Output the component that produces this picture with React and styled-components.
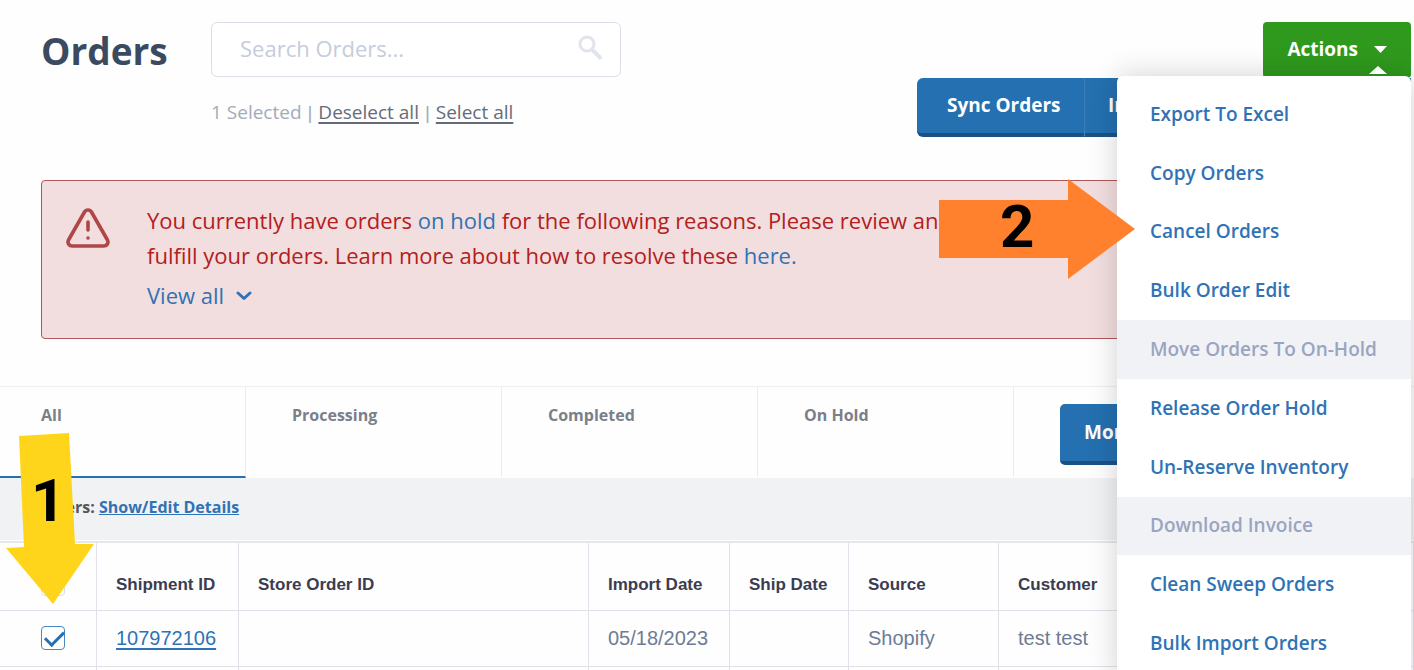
import React, { useState } from 'react';
import styled, { createGlobalStyle } from 'styled-components';
import { TriangleAlert } from 'lucide-react';

const menuItems = [
  { label: 'Export To Excel' },
  { label: 'Copy Orders' },
  { label: 'Cancel Orders' },
  { label: 'Bulk Order Edit' },
  { label: 'Move Orders To On-Hold', disabled: true },
  { label: 'Release Order Hold' },
  { label: 'Un-Reserve Inventory' },
  { label: 'Download Invoice', disabled: true },
  { label: 'Clean Sweep Orders' },
  { label: 'Bulk Import Orders' }
];

const tabs = ['All', 'Processing', 'Completed', 'On Hold'];

const orders = [{ id: '107972106', storeId: '', importDate: '05/18/2023', shipDate: '', source: 'Shopify', customer: 'test test' }];

const App = () => {
  const [search, setSearch] = useState('');
  const [activeTab, setActiveTab] = useState('All');
  const [selected, setSelected] = useState(['107972106']);

  const toggleOrder = (id) => {
    setSelected((prev) => (prev.includes(id) ? prev.filter((item) => item !== id) : [...prev, id]));
  };

  return (
    <Page>
      <GlobalStyle />
      <Header>
        <Title>Orders</Title>
        <SearchColumn>
          <SearchBox>
            <SearchInput
              aria-label="Search Orders"
              placeholder="Search Orders..."
              value={search}
              onChange={(e) => setSearch(e.target.value)}
            />
            <svg width="26" height="26" viewBox="0 0 26 26" fill="none" stroke="#e1e4ec">
              <circle cx="10" cy="9" r="7" strokeWidth="3" />
              <path d="M15 14.5 L23 22.5" strokeWidth="4" strokeLinecap="round" />
            </svg>
          </SearchBox>
          <SelectionBar>
            {selected.length} Selected <Separator>|</Separator> <SelectLink href="#none">Deselect all</SelectLink>{' '}
            <Separator>|</Separator> <SelectLink href="#all">Select all</SelectLink>
          </SelectionBar>
        </SearchColumn>
        <ButtonColumn>
          <ActionsWrap>
            <ActionsButton type="button">
              Actions
              <svg width="13" height="8" viewBox="0 0 13 8" fill="#fff">
                <path d="M0 1 H13 L6.5 8 Z" />
              </svg>
            </ActionsButton>
            <Menu>
              {menuItems.map((item) => (
                <li key={item.label}>
                  <MenuButton type="button" disabled={item.disabled}>
                    {item.label}
                  </MenuButton>
                </li>
              ))}
            </Menu>
          </ActionsWrap>
          <ButtonGroup>
            <BlueButton type="button">Sync Orders</BlueButton>
            <BlueButton type="button">In</BlueButton>
          </ButtonGroup>
        </ButtonColumn>
      </Header>

      <Alert>
        <TriangleAlert size={48} strokeWidth={1.8} color="#b04646" />
        <div>
          <AlertText>
            You currently have orders <a href="#hold">on hold</a> for the following reasons. Please review and
            <br />
            fulfill your orders. Learn more about how to resolve these <a href="#here">here.</a>
          </AlertText>
          <ViewAll type="button">
            View all
            <svg width="16" height="10" viewBox="0 0 16 10" fill="none" stroke="#2f73b5" strokeWidth="3">
              <path d="M2 2 L8 7.5 L14 2" strokeLinecap="round" strokeLinejoin="round" />
            </svg>
          </ViewAll>
        </div>
        <OrangeArrow>
          <svg width="196" height="100" viewBox="0 0 196 100" fill="#ff812d">
            <path d="M0 21 H129 V0 L196 50 L129 100 V79 H0 Z" />
          </svg>
          <StepNumber>2</StepNumber>
        </OrangeArrow>
      </Alert>

      <TabRow>
        {tabs.map((tab) => (
          <Tab key={tab} type="button" $active={tab === activeTab} onClick={() => setActiveTab(tab)}>
            {tab}
          </Tab>
        ))}
        <TabExtra>
          <BlueButton type="button" $compact>
            More
          </BlueButton>
        </TabExtra>
      </TabRow>

      <FilterBar>
        Filters: <a href="#details">Show/Edit Details</a>
      </FilterBar>

      <TableWrap>
        <OrderTable>
          <colgroup>
            <Col $w={97} />
            <Col $w={142} />
            <Col $w={350} />
            <Col $w={141} />
            <Col $w={119} />
            <Col $w={150} />
            <col />
          </colgroup>
          <thead>
            <tr>
              <HeadCell $check>
                <Checkbox aria-label="Select all orders" />
              </HeadCell>
              <HeadCell>Shipment ID</HeadCell>
              <HeadCell>Store Order ID</HeadCell>
              <HeadCell>Import Date</HeadCell>
              <HeadCell>Ship Date</HeadCell>
              <HeadCell>Source</HeadCell>
              <HeadCell>Customer</HeadCell>
            </tr>
          </thead>
          <tbody>
            {orders.map((order) => (
              <tr key={order.id}>
                <Cell $check>
                  <Checkbox
                    aria-label={`Select order ${order.id}`}
                    checked={selected.includes(order.id)}
                    onChange={() => toggleOrder(order.id)}
                  />
                </Cell>
                <Cell>
                  <a href="#order">{order.id}</a>
                </Cell>
                <Cell>{order.storeId}</Cell>
                <Cell>{order.importDate}</Cell>
                <Cell>{order.shipDate}</Cell>
                <Cell>{order.source}</Cell>
                <Cell>{order.customer}</Cell>
              </tr>
            ))}
            <tr>
              <Cell />
              <Cell />
              <Cell />
              <Cell />
              <Cell />
              <Cell />
              <Cell />
            </tr>
          </tbody>
        </OrderTable>
        <YellowArrow>
          <svg width="88" height="172" viewBox="0 0 88 172" fill="#ffd51c">
            <path d="M13 3 L63 0 L69 111 L88 111 L47 171 L0 115 L18 114 Z" />
          </svg>
          <StepNumber>1</StepNumber>
        </YellowArrow>
      </TableWrap>
    </Page>
  );
};

export default App;

const GlobalStyle = createGlobalStyle`
  * {
    box-sizing: border-box;
  }
  body {
    margin: 0;
    overflow: hidden;
    background: #fefefe;
    font-family: 'Open Sans', sans-serif;
  }
  a {
    color: #2f73b5;
  }
  button {
    font-family: inherit;
    cursor: pointer;
  }
`;

const Page = styled.div`
  height: 100vh;
  overflow: hidden;
`;

const Header = styled.header`
  display: flex;
  align-items: flex-start;
  padding: 22px 3px 0 41px;
`;

const Title = styled.h1`
  margin: 0;
  width: 170px;
  font-size: 37px;
  line-height: 58px;
  font-weight: 700;
  color: #3a4a60;
`;

const SearchColumn = styled.div`
  width: 410px;
`;

const SearchBox = styled.div`
  display: flex;
  align-items: center;
  height: 55px;
  padding: 0 17px 3px 28px;
  border: 1px solid #dcdfe8;
  border-radius: 6px;
  background: #fff;
`;

const SearchInput = styled.input`
  flex: 1;
  min-width: 0;
  padding: 0;
  border: 0;
  outline: 0;
  background: none;
  font: 400 22px 'Open Sans', sans-serif;
  &::placeholder {
    color: #c5ccdb;
    opacity: 1;
  }
`;

const SelectionBar = styled.div`
  margin-top: 20px;
  font-size: 19px;
  line-height: 30px;
  color: #a3abb8;
`;

const Separator = styled.span`
  margin: 0 1px;
  font-family: 'Liberation Sans', sans-serif;
`;

const SelectLink = styled.a`
  color: #666b7c;
  text-decoration-thickness: 2px;
  text-underline-offset: 3px;
`;

const ButtonColumn = styled.div`
  display: flex;
  flex-direction: column;
  align-items: flex-end;
  width: 494px;
  margin-left: auto;
`;

const ActionsWrap = styled.div`
  position: relative;
  z-index: 2;
`;

const ActionsButton = styled.button`
  display: flex;
  align-items: center;
  gap: 16px;
  height: 56px;
  padding: 0 24px 2px;
  border: 0;
  border-radius: 4px;
  background: #2f991d;
  color: #fff;
  font-size: 19px;
  font-weight: 700;
`;

const Menu = styled.ul`
  position: absolute;
  top: 54px;
  right: 0;
  display: flex;
  flex-direction: column;
  width: 294px;
  height: 606px;
  margin: 0;
  padding: 9px 0;
  list-style: none;
  border-radius: 6px;
  background: #fff;
  box-shadow: 0 0 30px rgba(0, 0, 0, 0.18);
  &::before {
    content: '';
    position: absolute;
    top: -10px;
    right: 24px;
    border: 9px solid transparent;
    border-top: 0;
    border-bottom: 8px solid #fff;
  }
  li {
    display: flex;
    flex: 1;
  }
`;

const MenuButton = styled.button`
  flex: 1;
  padding: 0 33px 1px;
  border: 0;
  background: none;
  text-align: left;
  white-space: nowrap;
  font-size: 19px;
  font-weight: 600;
  color: #2f73b5;
  &:disabled {
    background: #f1f2f6;
    color: #9aa5bf;
  }
`;

const ButtonGroup = styled.div`
  display: flex;
  align-self: stretch;
`;

const BlueButton = styled.button`
  flex: 1 1 auto;
  width: ${({ $compact }) => ($compact ? '160px' : 'auto')};
  height: ${({ $compact }) => ($compact ? '61px' : '59px')};
  padding: ${({ $compact }) => ($compact ? '0 24px 2px' : '0 23px 2px')};
  border: 0;
  border-bottom: 4px solid #1b5283;
  border-radius: ${({ $compact }) => ($compact ? '5px' : '0')};
  background: #2470b0;
  color: #fff;
  font-size: 19px;
  font-weight: 700;
  text-align: left;
  &:first-child:not(:last-child) {
    flex: 0 0 168px;
    padding-left: 30px;
    border-right: 1px solid #3a7fb9;
    border-radius: 6px 0 0 6px;
  }
`;

const Alert = styled.section`
  position: relative;
  display: flex;
  gap: 35px;
  margin: 43px 41px 0;
  padding: 22px 22px 25px;
  border: 1px solid #b0565c;
  border-radius: 4px;
  background: #f2dede;
  > svg {
    margin-top: 1px;
  }
`;

const AlertText = styled.p`
  margin: 0;
  font-size: 22px;
  line-height: 35px;
  font-weight: 500;
  color: #b22020;
  white-space: nowrap;
  a {
    text-decoration: none;
  }
`;

const ViewAll = styled.button`
  display: flex;
  align-items: center;
  gap: 12px;
  margin-top: 5px;
  padding: 0;
  border: 0;
  background: none;
  font-size: 22px;
  line-height: 35px;
  color: #2f73b5;
`;

const StepNumber = styled.span`
  position: absolute;
  font: 700 60px/60px Roboto, sans-serif;
  color: #000;
`;

/* pointers drawn over the page */
const OrangeArrow = styled.div`
  position: absolute;
  z-index: 3;
  top: -2px;
  left: 897px;
  ${StepNumber} {
    top: 18px;
    left: 61px;
  }
`;

const YellowArrow = styled.div`
  position: absolute;
  top: -107px;
  left: 6px;
  ${StepNumber} {
    top: 38px;
    left: 25px;
  }
`;

const TabRow = styled.nav`
  display: grid;
  grid-template-columns: 246px repeat(3, 256px) 1fr;
  height: 92px;
  margin-top: 47px;
  border-top: 1px solid #f0f0f3;
`;

const Tab = styled.button`
  display: flex;
  padding: 17px 46px;
  border: 0;
  border-right: 1px solid #ececef;
  border-bottom: 2px solid ${({ $active }) => ($active ? '#2470b0' : 'transparent')};
  background: none;
  font-size: 16px;
  line-height: 22px;
  font-weight: 700;
  color: #7a7f88;
  &:first-child {
    padding-left: 41px;
  }
`;

const TabExtra = styled.div`
  padding: 17px 46px 0;
`;

const FilterBar = styled.div`
  height: 62px;
  padding: 0 40px;
  background: #f1f2f4;
  font-size: 16px;
  line-height: 58px;
  font-weight: 700;
  color: #54565e;
  a {
    font-weight: 700;
  }
`;

const TableWrap = styled.div`
  position: relative;
  padding-top: 1px;
`;

const OrderTable = styled.table`
  width: 100%;
  table-layout: fixed;
  border-collapse: separate;
  border-spacing: 0;
  border-top: 2px solid #e5e7ed;
`;

const Col = styled.col`
  width: ${({ $w }) => $w}px;
`;

const HeadCell = styled.th`
  height: 68px;
  padding: ${({ $check }) => ($check ? '15px 0 0 41px' : '17px 0 0 19px')};
  border-right: 1px solid #e0e2ea;
  border-bottom: 1px solid #dfe1e9;
  text-align: left;
  font: 700 17px 'Liberation Sans', sans-serif;
  color: #3c3c50;
`;

const Cell = styled.td`
  height: 56px;
  padding: ${({ $check }) => ($check ? '0 0 2px 41px' : '0 0 0 19px')};
  border-right: 1px solid #e0e2ea;
  border-bottom: 1px solid #dfe1e9;
  font: 400 20px 'Liberation Sans', sans-serif;
  color: #6c7c96;
  a {
    text-decoration-thickness: 2px;
    text-underline-offset: 3px;
  }
`;

const Checkbox = styled.input.attrs({ type: 'checkbox' })`
  display: block;
  appearance: none;
  width: 24px;
  height: 24px;
  margin: 0;
  border: 1px solid #d9dce5;
  border-radius: 4px;
  background: #fff;
  &:checked {
    border-color: #4a86c0;
  }
  &:checked::after {
    content: '';
    display: block;
    width: 16px;
    height: 8px;
    margin: 4px 0 0 3px;
    border: solid #2470b0;
    border-width: 0 0 3px 3px;
    transform: rotate(-45deg);
  }
`;
